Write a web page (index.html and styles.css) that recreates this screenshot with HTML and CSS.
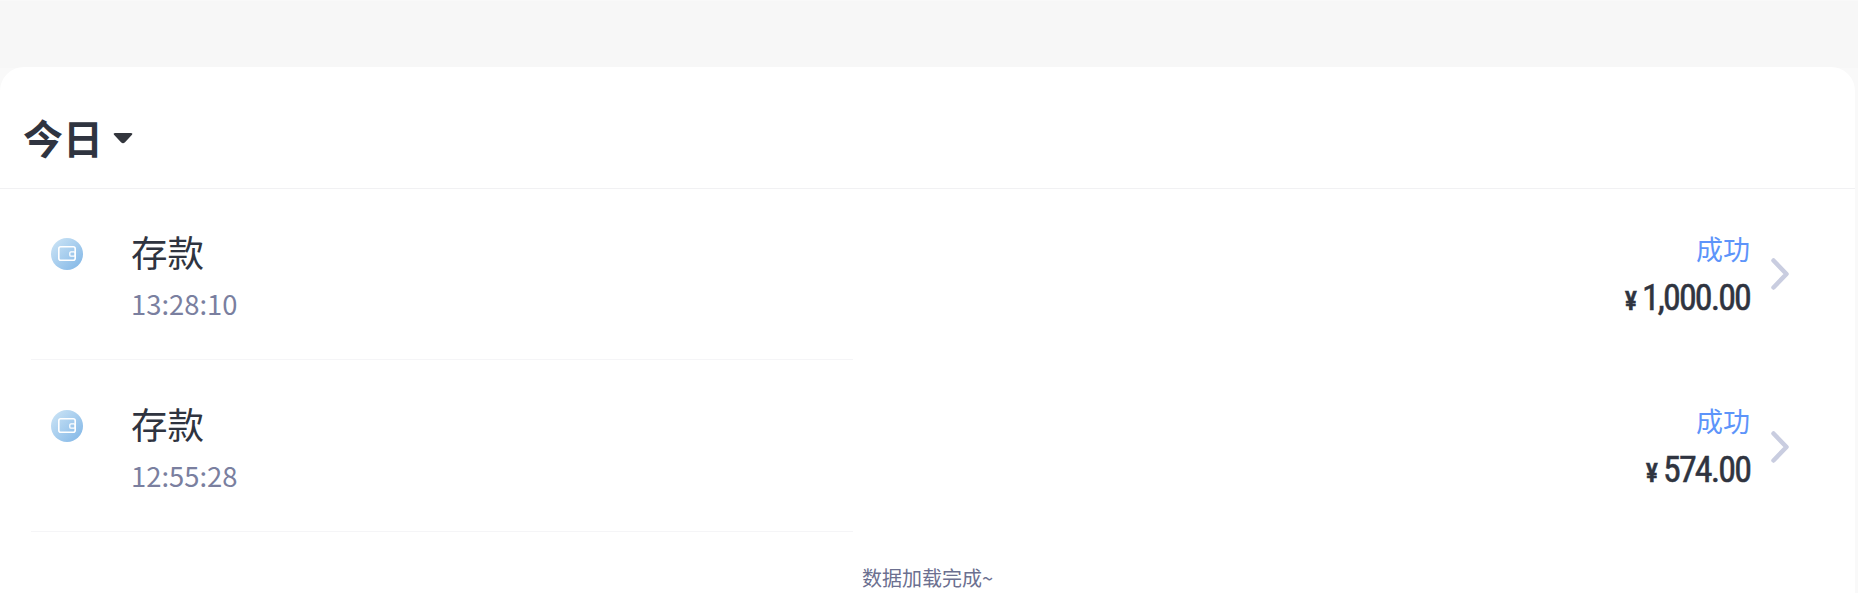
FILE: index.html
```html
<!DOCTYPE html>
<html lang="zh">
<head>
<meta charset="utf-8">
<title>交易记录</title>
<link rel="stylesheet" href="styles.css">
</head>
<body>
<div class="band"></div>
<main class="sheet">
  <header class="head"><span class="head-title">今日</span><svg class="caret" width="20" height="12" viewBox="0 0 20 12"><path d="M2 1h16q2 0 1 1.800L12 10.300q-2 1.700-4 0L1 2.800Q0 1 2 1z" fill="#33363d"/></svg></header>
  <section class="row">
    <div class="icon"><svg width="32" height="32" viewBox="0 0 32 32"><defs><linearGradient id="g1" x1="0" y1="0" x2="1" y2="1"><stop offset="0" stop-color="#cfe6f6"/><stop offset="1" stop-color="#7fb5e6"/></linearGradient></defs><circle cx="16" cy="16" r="16" fill="url(#g1)"/><rect x="7.800" y="8.800" width="16.400" height="13.400" rx="2" fill="none" stroke="#fff" stroke-width="1.600"/><rect x="18.800" y="13.800" width="5.400" height="4.400" rx="1.200" fill="none" stroke="#fff" stroke-width="1.300"/></svg></div>
    <div class="info"><div class="name">存款</div><div class="time">13:28:10</div></div>
    <div class="right"><div class="status">成功</div><div class="amount"><span class="cur">¥</span>1,000.00</div></div>
    <svg class="chev" width="18" height="32" viewBox="0 0 18 32"><path d="M2.500 2.500L15.500 16L2.500 29.500" fill="none" stroke="#c9cde0" stroke-width="4.500" stroke-linecap="round" stroke-linejoin="round"/></svg>
  </section>
  <section class="row">
    <div class="icon"><svg width="32" height="32" viewBox="0 0 32 32"><defs><linearGradient id="g2" x1="0" y1="0" x2="1" y2="1"><stop offset="0" stop-color="#cfe6f6"/><stop offset="1" stop-color="#7fb5e6"/></linearGradient></defs><circle cx="16" cy="16" r="16" fill="url(#g2)"/><rect x="7.800" y="8.800" width="16.400" height="13.400" rx="2" fill="none" stroke="#fff" stroke-width="1.600"/><rect x="18.800" y="13.800" width="5.400" height="4.400" rx="1.200" fill="none" stroke="#fff" stroke-width="1.300"/></svg></div>
    <div class="info"><div class="name">存款</div><div class="time">12:55:28</div></div>
    <div class="right"><div class="status">成功</div><div class="amount"><span class="cur">¥</span>574.00</div></div>
    <svg class="chev" width="18" height="32" viewBox="0 0 18 32"><path d="M2.500 2.500L15.500 16L2.500 29.500" fill="none" stroke="#c9cde0" stroke-width="4.500" stroke-linecap="round" stroke-linejoin="round"/></svg>
  </section>
  <footer class="done">数据加载完成~</footer>
</main>
</body>
</html>
```
FILE: styles.css
```css
* { box-sizing: border-box; }
html, body { margin: 0; height: 593px; overflow: hidden; }
body { background: #f9f9f9; font-family: "Noto Sans CJK SC", "Noto Sans", sans-serif; color: #2f3440; }
.band { height: 67px; background: #f7f7f7; margin-top: 1px; }
.sheet { width: 1855px; height: 526px; margin-top: -1px; background: #fff; border-radius: 24px 24px 0 0; }
.head { height: 122px; padding: 18px 23px 0; display: flex; align-items: center; gap: 10px; border-bottom: 1px solid #f1f1f3; }
.head-title { font-size: 40px; font-weight: 700; line-height: 50px; }
.caret { margin-top: 2px; }
.row { position: relative; height: 172px; padding-right: 105px; display: flex; align-items: flex-start; }
.row::after { content: ""; position: absolute; left: 31px; width: 822px; bottom: 1px; border-bottom: 1px solid #f5f5f7; }
.icon { width: 32px; height: 32px; margin: 49px 48px 0 51px; }
.info { flex: 1; padding-top: 41px; }
.name { font-size: 36.500px; line-height: 44px; }
.time { font-size: 27.400px; line-height: 38px; margin-top: 10px; color: #7a7f9f; }
.right { text-align: right; padding-top: 42px; }
.status { font-size: 27px; line-height: 36px; color: #5d94fa; }
.amount { font-family: "Roboto", sans-serif; font-stretch: condensed; font-size: 36px; font-weight: 400; -webkit-text-stroke: 0.5px #2f3440; line-height: 44px; margin-top: 9px; letter-spacing: -1.900px; }
.cur { font-size: 26px; font-weight: 500; margin-right: 7px; }
.chev { position: absolute; left: 1771px; top: 69px; }
.row + .row .chev { top: 70px; }
.done { text-align: center; font-size: 20px; line-height: 28px; padding-top: 31px; color: #6c7090; }
```
